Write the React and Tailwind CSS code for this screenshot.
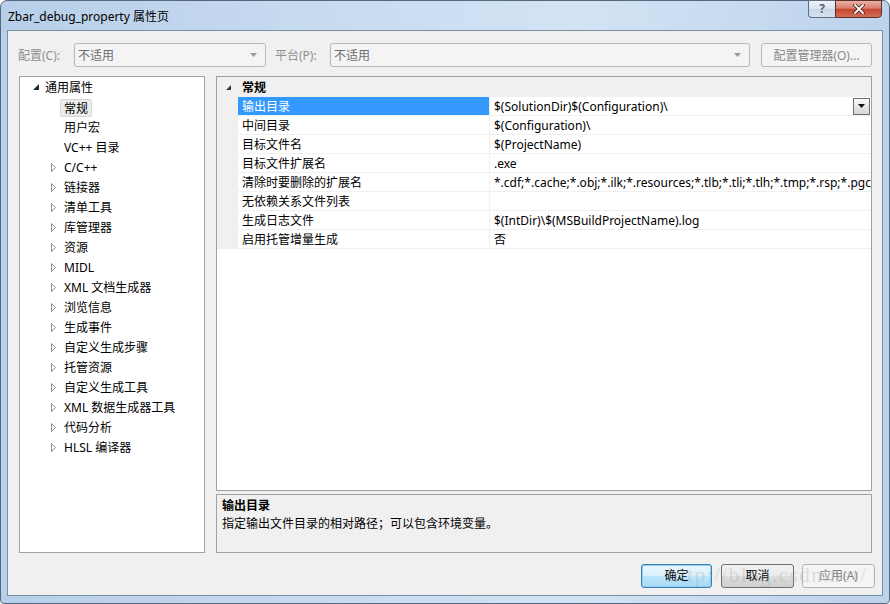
import React from "react";

const treeItems = [
  { t: "通用属性", lvl: 0 },
  { t: "常规", lvl: 1, leaf: true, sel: true },
  { t: "用户宏", lvl: 1, leaf: true },
  { t: "VC++ 目录", lvl: 1, leaf: true },
  { t: "C/C++", lvl: 1 },
  { t: "链接器", lvl: 1 },
  { t: "清单工具", lvl: 1 },
  { t: "库管理器", lvl: 1 },
  { t: "资源", lvl: 1 },
  { t: "MIDL", lvl: 1 },
  { t: "XML 文档生成器", lvl: 1 },
  { t: "浏览信息", lvl: 1 },
  { t: "生成事件", lvl: 1 },
  { t: "自定义生成步骤", lvl: 1 },
  { t: "托管资源", lvl: 1 },
  { t: "自定义生成工具", lvl: 1 },
  { t: "XML 数据生成器工具", lvl: 1 },
  { t: "代码分析", lvl: 1 },
  { t: "HLSL 编译器", lvl: 1 },
];

const props = [
  ["输出目录", "$(SolutionDir)$(Configuration)\\", true],
  ["中间目录", "$(Configuration)\\"],
  ["目标文件名", "$(ProjectName)"],
  ["目标文件扩展名", ".exe"],
  ["清除时要删除的扩展名", "*.cdf;*.cache;*.obj;*.ilk;*.resources;*.tlb;*.tli;*.tlh;*.tmp;*.rsp;*.pgc;*.pgd;*.meta;$(TargetPath)"],
  ["无依赖关系文件列表", ""],
  ["生成日志文件", "$(IntDir)\\$(MSBuildProjectName).log"],
  ["启用托管增量生成", "否"],
];

function ExpandedTri() {
  return (
    <svg width="6" height="6" viewBox="0 0 6 6" className="shrink-0">
      <polygon points="6,0 6,6 0,6" fill="#262626" />
    </svg>
  );
}

function CollapsedTri() {
  return (
    <svg width="6" height="9" viewBox="0 0 6 9" className="shrink-0">
      <polygon points="0.5,0.5 4.5,4.5 0.5,8.5" fill="#ffffff" stroke="#8c8c8c" strokeWidth="1" />
    </svg>
  );
}

function TreeRow({ item }) {
  if (item.lvl === 0) {
    return (
      <div className="h-[20px] flex items-center pl-[13px]">
        <ExpandedTri />
        <span className="ml-[6px] leading-[20px] pt-[1px] whitespace-nowrap">{item.t}</span>
      </div>
    );
  }
  if (item.leaf) {
    return (
      <div className="h-[20px] flex items-center pl-[40px]">
        {item.sel ? (
          <span className="h-[18px] mt-[1px] leading-[17px] px-[3px] border border-[#d5d5d5] bg-[#ececec] rounded-[2px] whitespace-nowrap">
            {item.t}
          </span>
        ) : (
          <span className="pl-[4px] leading-[20px] pt-[1px] whitespace-nowrap">{item.t}</span>
        )}
      </div>
    );
  }
  return (
    <div className="h-[20px] flex items-center pl-[31px]">
      <CollapsedTri />
      <span className="ml-[7px] leading-[20px] pt-[1px] whitespace-nowrap">{item.t}</span>
    </div>
  );
}

function ComboArrow({ color = "#9a9a9a" }) {
  return (
    <svg width="7" height="4" viewBox="0 0 7 4">
      <polygon points="0,0 7,0 3.5,4" fill={color} />
    </svg>
  );
}

export default function App() {
  return (
    <div className="relative w-[890px] h-[604px] bg-white overflow-hidden font-['Noto_Sans','Noto_Sans_CJK_SC',sans-serif] text-[12px] text-black">
      <div className="w-full h-full flex flex-col rounded-t-[7px] rounded-b-[4px] border border-[#55687d] bg-[linear-gradient(to_right,#b7cfe9,#c9dcf1_40%,#d3e3f4_65%,#bcd3ec)]">
        {/* Title bar */}
        <div className="h-[29px] flex justify-between pl-[7px] pr-[7px] shrink-0">
          <div className="pt-[7px] leading-[17px] text-[12px] text-black whitespace-nowrap">
            Zbar_debug_property 属性页
          </div>
          <div className="flex h-[18px] -mt-[1px]">
            <div className="w-[27px] h-full flex items-center justify-center border border-[#5d6e82] border-r-0 rounded-bl-[4px] bg-[linear-gradient(to_bottom,#eef3f9,#d9e4f0_50%,#c7d6e7_51%,#d6e2ef)]">
              <span className="text-[12px] leading-none font-bold text-[#5a6470]">?</span>
            </div>
            <div className="w-[47px] h-full flex items-center justify-center border border-[#5a2e2a] rounded-br-[4px] bg-[linear-gradient(to_bottom,#eab0a5,#d8806f_45%,#c7452f_52%,#d36e57)]">
              <svg width="12" height="10" viewBox="0 0 12 10">
                <path d="M2 1 L10 9 M10 1 L2 9" stroke="#4a2420" strokeWidth="3.4" strokeLinecap="square" />
                <path d="M2 1 L10 9 M10 1 L2 9" stroke="#ffffff" strokeWidth="1.8" strokeLinecap="square" />
              </svg>
            </div>
          </div>
        </div>

        {/* Client area */}
        <div className="mx-[6px] mb-[7px] flex-1 flex flex-col border border-[#7d8da0] bg-[#f0f0f0]">
          {/* Top row */}
          <div className="mt-[12px] h-[24px] flex items-center pl-[10px] pr-[10px]">
            <span className="w-[56px] pt-[1px] text-[#8f8f8f] whitespace-nowrap">配置(C):</span>
            <div className="w-[192px] h-full flex items-center justify-between pl-[3px] pr-[8px] border border-[#b5b9bd] rounded-[3px] bg-[#f4f4f4]">
              <span className="pt-[1px] text-[#6d6d6d]">不适用</span>
              <ComboArrow />
            </div>
            <span className="ml-[9px] w-[55px] pt-[1px] text-[#8f8f8f] whitespace-nowrap">平台(P):</span>
            <div className="w-[420px] h-full flex items-center justify-between pl-[3px] pr-[8px] border border-[#b5b9bd] rounded-[3px] bg-[#f4f4f4]">
              <span className="pt-[1px] text-[#6d6d6d]">不适用</span>
              <ComboArrow />
            </div>
            <div className="ml-[11px] w-[111px] h-full flex items-center justify-center pt-[1px] border border-[#b5b9bd] rounded-[3px] bg-[#f4f4f4] text-[#8a8a8a] whitespace-nowrap">
              配置管理器(O)...
            </div>
          </div>

          {/* Main panels */}
          <div className="mt-[9px] flex pl-[11px] pr-[10px] gap-[11px]">
            {/* Tree */}
            <div className="w-[187px] h-[477px] border border-[#a3a3a3] bg-white overflow-hidden">
              {treeItems.map((it, i) => (
                <TreeRow key={i} item={it} />
              ))}
            </div>

            {/* Right side */}
            <div className="w-[656px] flex flex-col">
              <div className="h-[415px] border border-[#a0a0a0] bg-white overflow-hidden">
                <div className="h-[20px] flex items-center bg-[#f0f0f0]">
                  <div className="w-[25px] pl-[9px] flex items-center">
                    <svg width="5" height="5" viewBox="0 0 5 5">
                      <polygon points="5,0 5,5 0,5" fill="#3a3a3a" />
                    </svg>
                  </div>
                  <span className="font-bold leading-[20px] pt-[1px]">常规</span>
                </div>
                {props.map(([name, value, sel], i) => (
                  <div key={i} className="h-[19px] flex border-b border-[#f0f0f0]">
                    <div className="w-[21px] bg-[#f0f0f0] shrink-0" />
                    <div
                      className={
                        sel
                          ? "w-[251px] shrink-0 pl-[4px] pt-[1px] leading-[17px] bg-[#3399ff] text-white whitespace-nowrap"
                          : "w-[251px] shrink-0 pl-[4px] pt-[1px] leading-[17px] whitespace-nowrap"
                      }
                    >
                      {name}
                    </div>
                    <div className="w-px bg-[#f0f0f0] shrink-0" />
                    <div className="flex-1 min-w-0 flex items-center pl-[4px]">
                      <span className="flex-1 min-w-0 overflow-hidden whitespace-nowrap pt-[1px] leading-[17px]">{value}</span>
                      {sel && (
                        <div className="w-[17px] h-[17px] mr-[1px] shrink-0 flex items-center justify-center border border-[#6e6e6e] bg-[linear-gradient(to_bottom,#fafafa,#e6e6e6_50%,#d8d8d8)]">
                          <svg width="7" height="4" viewBox="0 0 7 4">
                            <polygon points="0,0 7,0 3.5,4" fill="#111111" />
                          </svg>
                        </div>
                      )}
                    </div>
                  </div>
                ))}
              </div>
              <div className="mt-[3px] h-[59px] border border-[#a0a0a0] bg-[#f0f0f0] pl-[5px] pt-[2px] leading-[18px]">
                <div className="font-bold">输出目录</div>
                <div>指定输出文件目录的相对路径；可以包含环境变量。</div>
              </div>
            </div>
          </div>

          {/* Bottom buttons */}
          <div className="mt-[11px] h-[24px] flex justify-end pr-[7px]">
            <div className="w-[71px] h-full flex items-center justify-center border border-[#3c7fb1] rounded-[3px] bg-[linear-gradient(to_bottom,#eaf6fd,#d9f0fc_50%,#bee6fd_51%,#a7d9f5)] shadow-[inset_0_0_0_1px_#8ed0f2]">
              确定
            </div>
            <div className="ml-[9px] w-[73px] h-full flex items-center justify-center border border-[#707070] rounded-[3px] bg-[linear-gradient(to_bottom,#f2f2f2,#ebebeb_50%,#dddddd_51%,#cfcfcf)]">
              取消
            </div>
            <div className="ml-[8px] w-[73px] h-full flex items-center justify-center border border-[#adb2b5] rounded-[3px] bg-[#f4f4f4] text-[#838383]">
              应用(A)
            </div>
          </div>
        </div>
      </div>

      {/* Watermark */}
      <div className="pointer-events-none absolute left-[668px] top-[561px] font-['Liberation_Serif',serif] text-[21px] leading-[28px] tracking-[1.5px] text-[rgba(160,160,160,0.3)] whitespace-nowrap">
        http://blog.csdn.net/
      </div>
    </div>
  );
}
